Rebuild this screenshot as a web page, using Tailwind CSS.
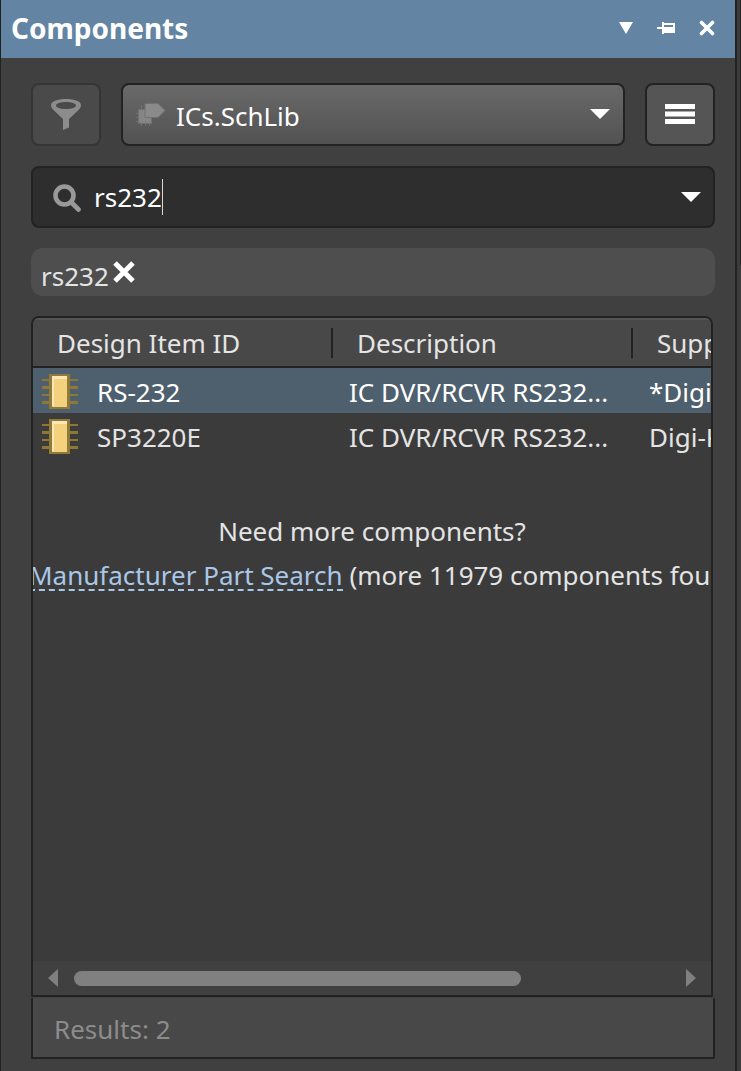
<!DOCTYPE html>
<html lang="en">
<head>
<meta charset="utf-8">
<meta name="viewport" content="width=device-width, initial-scale=1">
<title>Components</title>
<script src="https://cdn.jsdelivr.net/npm/@tailwindcss/browser@4"></script>
</head>
<body class="flex min-h-screen bg-[#3c3c3c] font-['Noto_Sans','Open_Sans',sans-serif] text-[26px] leading-9 text-[#e4e4e4]">
<main class="flex min-w-0 flex-1 flex-col border-r-2 border-l border-[#222222] bg-[#404040]">
  <header class="flex h-[58px] items-center justify-between bg-[#6384a3] pr-5 pb-[2px] pl-[10px] text-white">
    <h1 class="text-[28px] font-bold">Components</h1>
    <div class="flex items-center gap-6">
      <button type="button" aria-label="Panel menu" class="flex h-4 w-[14px] items-center justify-center"><svg class="h-3 w-[14px]" viewBox="0 0 14 12" fill="currentColor"><path d="M0 0h14L7 12z"/></svg></button>
      <button type="button" aria-label="Pin panel" class="flex h-4 w-[18px] items-center justify-center"><svg class="h-3 w-[18px]" viewBox="0 0 18 12" fill="currentColor" shape-rendering="crispEdges"><path fill-rule="evenodd" d="M0 5h5V0h2v1h11v10H7v1H5V7H0zM7 3v2h9V3z"/></svg></button>
      <button type="button" aria-label="Close panel" class="flex size-4 items-center justify-center"><svg class="size-4" viewBox="0 0 16 16" fill="none" stroke="currentColor" stroke-width="3.6" stroke-linecap="round"><path d="M2.500 2.500l11 11M13.500 2.500l-11 11"/></svg></button>
    </div>
  </header>

  <div class="flex flex-1 flex-col pt-[25px] pr-5 pb-3 pl-[30px]">
    <div class="flex h-[63px] gap-5">
      <button type="button" aria-label="Filter" class="flex w-[70px] items-center justify-center rounded-lg border-2 border-[#353535] bg-[#4a4a4a] text-[#8c8c8c]">
        <svg class="h-[31px] w-[30px]" viewBox="0 0 30 31" fill="currentColor"><path fill-rule="evenodd" d="M15 0c8.500 0 15 2.400 15 6 0 2-.8 3.200-2.500 5L18 20v8.500L12 31V20L2.500 11C.8 9.200 0 8 0 6 0 2.400 6.500 0 15 0zm0 3C9.500 3 5 4.400 5 6.500S9.500 10 15 10s10-1.400 10-3.500S20.500 3 15 3z"/></svg>
      </button>
      <div class="relative min-w-0 flex-1">
        <select aria-label="Library" class="size-full appearance-none rounded-lg border-2 border-[#222222] bg-linear-to-b from-[#696969] to-[#525252] pt-[2px] pr-12 pl-[53px] text-white"><option>ICs.SchLib</option></select>
        <svg class="pointer-events-none absolute top-5 left-[15px] h-[23px] w-[30px]" viewBox="0 0 30 23"><g fill="none" stroke="#707070" stroke-width="1"><path d="M0 10.500h3M0 14.500h3M0 18.500h3M5.500 20v3M9.500 20v3M13.500 20v3M5.500 2v4"/></g><path d="M2.500 6.500h13v14h-13z" fill="#858585" stroke="#707070"/><path d="M9 .5h13l7 7-7 7H9z" fill="#8a8a8a" stroke="#707070"/></svg>
        <svg class="pointer-events-none absolute top-[26px] right-[15px] h-[10px] w-5" viewBox="0 0 20 10" fill="#fff"><path d="M0 0h20L10 10z"/></svg>
      </div>
      <button type="button" aria-label="Operations" class="flex w-[70px] items-center justify-center rounded-lg border-2 border-[#222222] bg-[#555555] pb-[2px] text-white">
        <svg class="h-5 w-[30px]" viewBox="0 0 30 20" fill="currentColor"><path d="M0 0h30v5H0zM0 7.500h30v5H0zM0 15h30v5H0z"/></svg>
      </button>
    </div>

    <div class="mt-5 flex h-[62px] items-center rounded-lg border-2 border-[#222222] bg-[#2e2e2e] pr-3 pl-5">
      <svg class="mt-[2px] size-7 shrink-0" viewBox="0 0 28 28" fill="none" stroke="#999999"><circle cx="11.500" cy="11.500" r="9" stroke-width="4.600"/><path d="M18.500 18.500L25.500 25.500" stroke-width="4.600" stroke-linecap="round"/></svg>
      <input aria-label="Search components" type="text" value="rs232" class="ml-[13px] max-w-full min-w-0 field-sizing-content bg-transparent text-white outline-none">
      <span class="h-9 w-px bg-[#d8d8d8]" aria-hidden="true"></span>
      <button type="button" aria-label="Search history" class="ml-auto flex h-10 w-5 items-center justify-center"><svg class="h-[10px] w-5" viewBox="0 0 20 10" fill="#fff"><path d="M0 0h20L10 10z"/></svg></button>
    </div>

    <div class="mt-5 flex h-12 gap-1 rounded-xl bg-[#4e4e4e] pt-[10px] pl-[10px]">
      <span>rs232</span>
      <button type="button" aria-label="Remove filter rs232" class="mt-[3px] flex size-[22px] items-center justify-center text-white"><svg class="size-[22px]" viewBox="0 0 22 22" fill="none" stroke="currentColor" stroke-width="5"><path d="M2 2l18 18M20 2L2 20"/></svg></button>
    </div>

    <section class="mt-5 mr-[2px] flex flex-1 flex-col overflow-hidden rounded-t-lg border-2 border-[#222222] bg-[#3b3b3b]">
      <table class="w-full table-fixed border-separate border-spacing-0 text-left whitespace-nowrap">
        <colgroup><col class="w-[300px]"><col class="w-[300px]"><col></colgroup>
        <thead>
          <tr class="bg-[#484848]">
            <th class="h-[50px] border-t-2 border-b-2 border-t-[#545454] border-b-[#222222] p-0 font-normal"><div class="flex h-[30px] items-center border-r-2 border-[#222222] pl-6">Design Item ID</div></th>
            <th class="h-[50px] border-t-2 border-b-2 border-t-[#545454] border-b-[#222222] p-0 font-normal"><div class="flex h-[30px] items-center border-r-2 border-[#222222] pl-6">Description</div></th>
            <th class="h-[50px] overflow-hidden border-t-2 border-b-2 border-t-[#545454] border-b-[#222222] p-0 pl-6 font-normal">Supplier</th>
          </tr>
        </thead>
        <tbody>
          <tr class="h-[45px] bg-[#4e5f6d] text-white">
            <td class="p-0 pt-[2px] pl-[9px]"><div class="flex items-center gap-[19px]"><svg class="h-[35px] w-9 shrink-0" viewBox="0 0 36 35" shape-rendering="crispEdges"><path d="M0 5h36v2H0zM0 12h36v3H0zM0 20h36v2H0zM0 27h36v3H0z" fill="#8f7833"/><path d="M7 0h21v35H7z" fill="#8f7a39"/><path d="M10 2h15v31H10z" fill="#f4d27d"/><path d="M10 2h15v3H12v27h-2z" fill="#fbe6b8"/></svg>RS-232</div></td>
            <td class="truncate p-0 pt-[2px] pr-3 pl-4">IC DVR/RCVR RS232...</td>
            <td class="overflow-hidden p-0 pt-[2px] pl-4">*Digi-Key</td>
          </tr>
          <tr class="h-[45px]">
            <td class="p-0 pt-[2px] pl-[9px]"><div class="flex items-center gap-[19px]"><svg class="h-[35px] w-9 shrink-0" viewBox="0 0 36 35" shape-rendering="crispEdges"><path d="M0 5h36v2H0zM0 12h36v3H0zM0 20h36v2H0zM0 27h36v3H0z" fill="#8f7833"/><path d="M7 0h21v35H7z" fill="#8f7a39"/><path d="M10 2h15v31H10z" fill="#f4d27d"/><path d="M10 2h15v3H12v27h-2z" fill="#fbe6b8"/></svg>SP3220E</div></td>
            <td class="truncate p-0 pt-[2px] pr-3 pl-4">IC DVR/RCVR RS232...</td>
            <td class="overflow-hidden p-0 pt-[2px] pl-4">Digi-Key</td>
          </tr>
        </tbody>
      </table>
      <div class="mt-[51px] leading-11 whitespace-nowrap">
        <p class="text-center">Need more components?</p>
        <p class="-ml-1"><a href="#" class="inline-block border-b-2 border-dashed border-[#a9c7e8] leading-7 text-[#a9c7e8]">Manufacturer Part Search</a> (more 11979 components found)</p>
      </div>
      <div class="mt-auto flex h-[34px] items-center gap-4 bg-[#404040] px-[15px] text-[#808080]">
        <button type="button" aria-label="Scroll left" class="h-[18px] w-[10px]"><svg class="h-[18px] w-[10px]" viewBox="0 0 10 18" fill="currentColor"><path d="M10 0v18L0 9z"/></svg></button>
        <div class="h-[15px] flex-1"><div class="h-full w-3/4 rounded-full bg-[#808080]"></div></div>
        <button type="button" aria-label="Scroll right" class="h-[18px] w-[10px]"><svg class="h-[18px] w-[10px]" viewBox="0 0 10 18" fill="currentColor"><path d="M0 0v18l10-9z"/></svg></button>
      </div>
    </section>
    <footer class="mt-px flex h-[61px] items-center border-2 border-t-0 border-[#222222] bg-[#484848] pt-[2px] pl-[21px] text-[#8c8c8c]">Results: 2</footer>
  </div>
</main>
<div class="w-1 shrink-0 bg-[#3c3c3c]"><div class="ml-auto h-[265px] w-px bg-[#222222]"></div></div>
</body>
</html>
